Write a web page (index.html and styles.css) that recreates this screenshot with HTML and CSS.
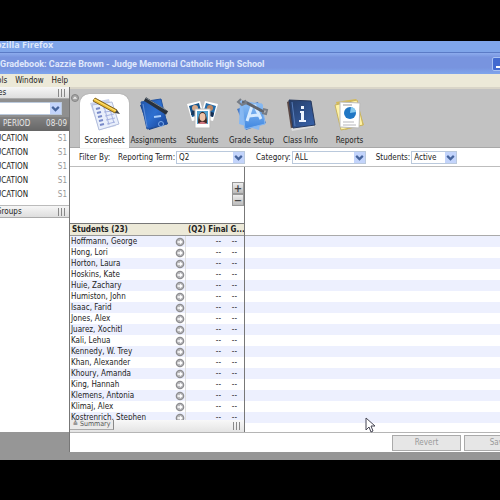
FILE: index.html
```html
<!DOCTYPE html>
<html lang="en">
<head>
<meta charset="utf-8">
<title>Gradebook: Cazzie Brown - Judge Memorial Catholic High School</title>
<link rel="stylesheet" href="styles.css">
</head>
<body>
<svg class="defs" aria-hidden="true">
  <defs>
    <linearGradient id="blue" x1="0" y1="0" x2="1" y2="1"><stop offset="0" stop-color="#2358ac"/><stop offset=".5" stop-color="#2d6fd0"/><stop offset="1" stop-color="#163e91"/></linearGradient>
    <linearGradient id="sky" x1="0" y1="0" x2="0" y2="1"><stop offset="0" stop-color="#8fc0f5"/><stop offset="1" stop-color="#3f86e0"/></linearGradient>
    <linearGradient id="navy" x1="0" y1="0" x2="1" y2="1"><stop offset="0" stop-color="#253c66"/><stop offset="1" stop-color="#3864ae"/></linearGradient>
    <symbol id="go" viewBox="0 0 10 10"><circle cx="5" cy="5" r="4.3" fill="#8d8d90"/><circle cx="5" cy="5" r="3" fill="#b9b9bc"/><path d="M2.5 4.2H5V2.7L7.8 5 5 7.3V5.8H2.5z" fill="#fff"/></symbol>
    <symbol id="chevron" viewBox="0 0 10 10"><path d="M2 3.5 5 6.5 8 3.5" fill="none" stroke="#46649c" stroke-width="2"/></symbol>
  </defs>
</svg>
<div class="window">
  <div class="outer-title"><span class="outer-name">ozilla Firefox</span></div>
  <header class="title"><h1>Gradebook: Cazzie Brown - Judge Memorial Catholic High School</h1><button class="minimize" aria-label="Minimize"></button></header>
  <nav class="menu"><a href="#">ols</a><a href="#">Window</a><a href="#">Help</a></nav>
  <div class="workspace">
    <aside class="sidebar">
      <div class="side-head"><span>es</span><i class="grip"></i></div>
      <div class="side-pick"><span class="select"><select aria-label="Term"><option></option></select><svg><use href="#chevron"/></svg></span></div>
      <div class="side-period"><span>PERIOD</span><span>08-09</span></div>
      <ul class="classes">
        <li><span>UCATION</span><span>S1</span></li>
        <li><span>UCATION</span><span>S1</span></li>
        <li><span>UCATION</span><span>S1</span></li>
        <li><span>UCATION</span><span>S1</span></li>
        <li><span>UCATION</span><span>S1</span></li>
      </ul>
      <div class="side-head groups"><span>Groups</span><i class="grip"></i></div>
      <div class="side-body"></div>
      <div class="side-foot"></div>
    </aside>
    <main class="main">
      <div class="tabs">
        <button class="collapse" aria-label="Collapse"><svg viewBox="0 0 10 10"><circle cx="5" cy="5" r="3.5" fill="#a5a5a5" stroke="#858585"/><path d="M2.8 5.8 5 3.6 7.2 5.8z" fill="#eee"/></svg></button>
        <button class="tab active"><svg viewBox="0 0 36 36">
          <path d="M3 6 22 2l7 27-17 4z" fill="#cbd3ec"/><path d="M5 8 25 5l7 22-20 6z" fill="#e9effb" stroke="#b3bedd"/>
          <path d="M9 12l4-1M10 16l4-1M11 20l4-1M12 24l4-1M13 28l4-1" stroke="#7889c8" stroke-width="2"/><path d="M16 11l8-1M17 15l9-1M18 19l9-2M19 23l9-2M20 27l8-2M17 9l5 19M22 9l5 17" stroke="#a6b2e0" stroke-width="1"/>
          <path d="M8 1 30 13l-2 3L6 4z" fill="#edbd31" stroke="#80621f"/><path d="M7 2 29 14" stroke="#ffe278"/><path d="m28 16 2-3 3 4z" fill="#444"/></svg><span>Scoresheet</span></button>
        <button class="tab"><svg viewBox="0 0 36 36">
          <path d="m4 8 20-5 8 24-19 6z" fill="#153c82"/><path d="m5 5 20-3 6 25-20 5z" fill="url(#blue)" stroke="#2454a0"/><path d="m7 7 4 23" stroke="#638fd7"/><path d="m18 20 7-1" stroke="#a8cdfa" stroke-width="2"/><circle cx="25" cy="27" r="2.5" fill="none" stroke="#7eacec"/>
          <path d="M9 2 31 16" stroke="#29313c" stroke-width="4"/><path d="m10 1 20 12" stroke="#77838e"/></svg><span>Assignments</span></button>
        <button class="tab"><svg viewBox="0 0 36 36">
          <path d="m2 7 13-3 5 17-13 3z" fill="#fff"/><path d="m4 9 10-3 3 11-10 3z" fill="#17558e"/><circle cx="10" cy="11" r="3" fill="#d8a887"/><path d="m6 18 1-4 8-1 2 4z" fill="#18365b"/>
          <path d="m20 4 13 3-5 17-13-3z" fill="#fff"/><path d="m21 6 10 3-3 11-10-3z" fill="#236cab"/><circle cx="25" cy="11" r="3" fill="#bb8662"/><path d="m20 17 2-4 7 3-1 4z" fill="#152d50"/>
          <path d="M10 12h15v19H10z" fill="#fff" stroke="#bbb"/><path d="M12 14h11v13H12z" fill="#52a1ce"/><path d="M13 26c0-15 9-15 9 0z" fill="#402a25"/><ellipse cx="17.5" cy="20" rx="3" ry="4" fill="#efc3a7"/><path d="M13 27q4-5 9 0z" fill="#cf7780"/></svg><span>Students</span></button>
        <button class="tab"><svg viewBox="0 0 36 36">
          <path d="m3 12 21-7 8 21-20 7z" fill="#4779c5"/><path d="m6 3 23 5-4 25-20-6z" fill="#86b8f3"/><path d="m8 5 20 2 3 20-20 5z" fill="url(#sky)" stroke="#86b7ef"/>
          <path d="m13 24 5-15h3l6 13M15 19l9-1" fill="none" stroke="#d6eaff" stroke-width="3"/><path d="m8 5 5 1 17 9" fill="none" stroke="#60656e" stroke-width="3"/><path d="M7 2 4 5l4 3 4-2-1-3M29 12l4 1-1 4-4-1" fill="none" stroke="#777d86" stroke-width="2"/></svg><span>Grade Setup</span></button>
        <button class="tab"><svg viewBox="0 0 36 36">
          <path d="m4 5 4-2 4 27-4 2z" fill="#5b4845"/><path d="m8 31 23-4v3L9 34z" fill="#ddd"/><path d="m6 3 22 1 4 24-22 3z" fill="url(#navy)" stroke="#27395e"/><path d="m9 5 3 24" stroke="#567cba"/><path d="M17 14h4v9h2v2h-7v-2h2v-7h-1zM18 9h3v3h-3z" fill="#eef4ff"/></svg><span>Class Info</span></button>
        <button class="tab"><svg viewBox="0 0 36 36">
          <path d="m4 5 20-3 8 26-19 5z" fill="#d5ba57"/><path d="m3 8 22-5 6 25-22 5z" fill="#fff3a7" stroke="#c8b360"/><path d="m8 5 20 1-1 25-19-1z" fill="#fff" stroke="#bbb"/><path d="M11 8h9" stroke="#999"/><circle cx="18" cy="16" r="6" fill="#2077c4"/><path d="m18 16 1-6a6 6 0 0 1 5 5z" fill="#85c9ef"/><path d="M11 25h11M11 28h13" stroke="#b7b7bc"/></svg><span>Reports</span></button>
      </div>
      <form class="filters">
        <span class="filter-by">Filter By:</span>
        <label for="term">Reporting Term:</label><span class="select term"><select id="term"><option>Q2</option></select><svg><use href="#chevron"/></svg></span>
        <label for="category">Category:</label><span class="select category"><select id="category"><option>ALL</option></select><svg><use href="#chevron"/></svg></span>
        <label for="status">Students:</label><span class="select status"><select id="status"><option>Active</option></select><svg><use href="#chevron"/></svg></span>
      </form>
      <div class="sheet">
        <section class="roster">
          <div class="resize"><div class="zoomers"><button aria-label="Expand">+</button><button aria-label="Shrink">−</button></div></div>
          <div class="roster-body">
          <table>
            <colgroup><col><col class="col-open"><col class="col-grade"><col class="col-score"></colgroup>
            <thead><tr><th colspan="2">Students (23)</th><th colspan="2">(Q2) Final G...</th></tr></thead>
            <tbody id="students"></tbody>
          </table>
          </div>
          <div class="summary"><button>≙ Summary</button><i class="grip"></i></div>
        </section>
        <section class="scores"><div class="scores-head"></div><div class="scores-rows"></div></section>
      </div>
      <footer class="actions"><button disabled>Revert</button><button disabled>Save</button></footer>
    </main>
  </div>
  <div class="window-edge"></div>
</div>
<svg class="cursor" viewBox="0 0 10 16" aria-hidden="true"><path d="M1 1v12l3-3 2 5 2-1-2-5h4z" fill="#fff" stroke="#454553"/></svg>
<script src="script.js"></script>
</body>
</html>
```
FILE: styles.css
```css
* { box-sizing: border-box; }
body {
  margin: 0;
  height: 100vh;
  padding: 41px 0 40px;
  overflow: hidden;
  background: #000;
  color: #222;
  font: 8px/11px "DejaVu Sans Condensed", "DejaVu Sans", sans-serif;
}
button, select { font: inherit; color: inherit; border: 0; padding: 0; margin: 0; background: none; }
.defs { position: absolute; width: 0; height: 0; }
.window { height: 100%; display: flex; flex-direction: column; overflow: hidden; background: #fff; }
.outer-title { height: 12px; background: #7fa5ea; border-bottom: 1px solid #5b7bc6; color: #dce7fb; font: bold 9px/8px "Open Sans", sans-serif; overflow: hidden; }
.outer-name { margin-left: -4px; }
.title { height: 21px; display: flex; justify-content: space-between; align-items: center; background: linear-gradient(#8dacee, #7894df 20%, #7894df 70%, #7fa5ec); overflow: hidden; }
.title h1 { margin: 0; color: #e0e9fc; font: bold 9px/20px Roboto, sans-serif; white-space: nowrap; }
.minimize { flex: none; width: 13px; height: 14px; margin-right: -5px; border: 1px solid #a8c2f3; border-radius: 2px; background: linear-gradient(#fff, #fff) 3px 8px / 6px 2px no-repeat #426ad0; }
.menu { height: 13px; display: flex; gap: 8px; margin-left: -3px; background: #ece9d8; line-height: 13px; }
.menu a { color: #222; text-decoration: none; }
.workspace { flex: 1; min-height: 0; display: flex; }
.sidebar { flex: none; width: 70px; display: flex; flex-direction: column; border-right: 1px solid #777; background: #fff; }
.side-head { height: 12px; display: flex; align-items: center; justify-content: space-between; padding-right: 4px; background: linear-gradient(#f6f6f6, #dedede); border-bottom: 1px solid #aaa; }
.side-head span { margin-left: -2px; }
.grip { width: 7px; height: 8px; background: repeating-linear-gradient(90deg, #888 0 1px, transparent 1px 3px); }
.side-pick { height: 18px; display: flex; align-items: center; padding-right: 7px; background: #8f8f8f; }
.side-pick .select { width: 100%; border-left: 0; }
.side-period { height: 14px; display: flex; justify-content: space-between; padding: 0 2px 0 3px; background: linear-gradient(#828282, #666); color: #e8e8e8; line-height: 14px; }
.classes { list-style: none; margin: 0; padding: 1px 2px 3px 0; border-bottom: 1px solid #bbb; }
.classes li { height: 14px; display: flex; justify-content: space-between; line-height: 14px; }
.classes li span:first-child { margin-left: -4px; }
.classes li span:last-child { color: #999; }
.side-head.groups span { margin-left: -4px; }
.side-body { flex: 1; }
.side-foot { height: 20px; background: #969696; }
.main { flex: 1; min-width: 0; display: flex; flex-direction: column; }
.tabs { height: 61px; display: flex; padding-top: 5px; background: #c2c2c2; border-top: 2px solid #d9d5c8; border-bottom: 1px solid #a8a8a8; }
.collapse { width: 10px; height: 10px; }
.collapse svg { display: block; width: 10px; height: 10px; margin-top: -2px; }
.tab { width: 49px; flex: none; display: flex; flex-direction: column; align-items: center; justify-content: flex-end; gap: 2px; padding-bottom: 1px; white-space: nowrap; }
.tab svg { width: 36px; height: 36px; }
.tab.active { background: #fff; border-radius: 9px 9px 0 0; margin-bottom: -1px; padding-bottom: 2px; box-shadow: 0 0 1px #777; }
.filters { height: 19px; display: flex; align-items: center; padding-left: 9px; border-bottom: 1px solid #bdbdbd; white-space: nowrap; }
.filter-by { margin-right: 8px; }
.select { display: inline-flex; align-items: center; position: relative; height: 13px; border: 1px solid #bac9dc; background: #fff; }
.select select { appearance: none; width: 100%; height: 11px; padding-left: 2px; border-radius: 0; outline: 0; }
.select svg { position: absolute; right: 0; top: 0; width: 11px; height: 11px; background: #c3d4fb; pointer-events: none; }
.filters .select { margin-left: 1px; }
.term { width: 69px; margin-right: 11px; }
.category { width: 74px; margin-right: 10px; }
.status { width: 46px; }
.sheet { flex: 1; min-height: 0; display: flex; border-bottom: 1px solid #b5b5b5; }
.roster { flex: none; width: 175px; display: flex; flex-direction: column; border-right: 1px solid #777; }
.resize { height: 57px; display: flex; justify-content: flex-end; align-items: flex-end; padding-bottom: 17px; border-bottom: 1px solid #777; flex: none; }
.zoomers { display: flex; flex-direction: column; width: 12px; }
.zoomers button { height: 12px; border: 1px solid #999; background: linear-gradient(#eee, #bbb); color: #444; font: bold 10px/9px "DejaVu Sans", sans-serif; }
.roster-body { flex: 1; min-height: 0; overflow: hidden; }
table { width: 100%; border-collapse: separate; border-spacing: 0; table-layout: fixed; }
.col-open { width: 11px; }
.col-grade { width: 42px; }
.col-score { width: 16px; }
th { height: 12px; padding: 0 2px; background: #ece9d8; border-bottom: 1px solid #999; text-align: left; line-height: 11px; white-space: nowrap; }
td { height: 11px; padding: 0; white-space: nowrap; }
tbody tr:nth-child(odd) { background: #edf0fe; }
.student { padding-left: 1px; }
.open { border-right: 1px solid #ddd; }
.open button, .open svg { display: block; width: 10px; height: 10px; }
.mark { text-align: right; padding-right: 7px; }
.summary { flex: none; height: 12px; display: flex; justify-content: space-between; align-items: center; padding-right: 4px; background: linear-gradient(#f8f8f8, #e4e4e4); }
.summary button { width: 44px; height: 10px; align-self: flex-start; border-right: 1px solid #888; border-bottom: 1px solid #aaa; background: #eaeaea; color: #555; font-size: 7px; line-height: 9px; }
.scores { flex: 1; display: flex; flex-direction: column; }
.scores-head { height: 69px; border-bottom: 1px solid #aaa; }
.scores-rows { flex: 1; background: repeating-linear-gradient(#edf0fe 0 11px, #fff 11px 22px); }
.actions { height: 19px; flex: none; display: flex; justify-content: flex-end; gap: 3px; align-items: center; margin-right: -33px; }
.actions button { width: 69px; height: 16px; border: 1px solid #aaa; background: #e6e6e6; color: #999; }
.window-edge { flex: none; height: 8px; background: #969696; }
.cursor { position: absolute; left: 365px; top: 417px; width: 10px; height: 16px; }
```
FILE: script.js
```js
const names = ["Hoffmann, George", "Hong, Lori", "Horton, Laura", "Hoskins, Kate", "Huie, Zachary", "Humiston, John", "Isaac, Farid", "Jones, Alex", "Juarez, Xochitl", "Kali, Lehua", "Kennedy, W. Trey", "Khan, Alexander", "Khoury, Amanda", "King, Hannah", "Klemens, Antonia", "Klimaj, Alex", "Kostrenrich, Stephen"];
document.getElementById("students").innerHTML = names.map(name =>
  `<tr><td class="student">${name}</td><td class="open"><button aria-label="Open ${name}"><svg><use href="#go"/></svg></button></td><td class="mark">--</td><td class="mark">--</td></tr>`
).join("");
```
